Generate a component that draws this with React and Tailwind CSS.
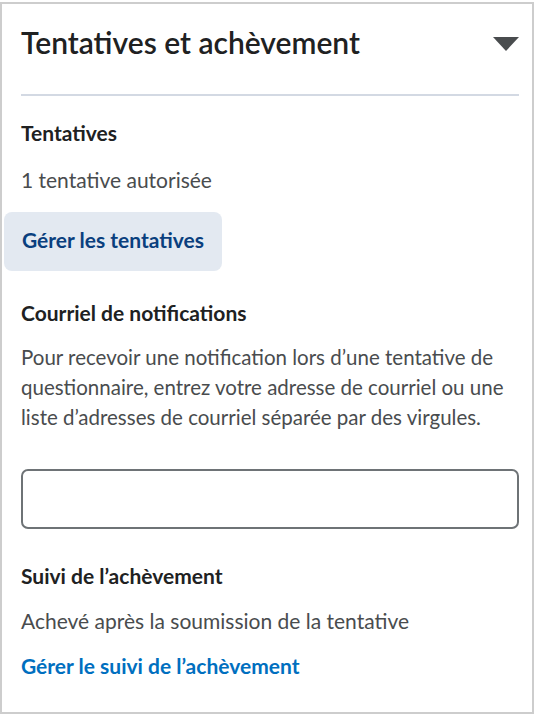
export default function App() {
  return (
    <div className="pt-[2px] bg-white" style={{ fontFamily: "Lato, 'Noto Sans', sans-serif" }}>
      <div className="w-[534px] h-[712px] border-2 border-[#cdcdcd] bg-white">
        <div className="pl-[19px] pr-[13px]">
          <div className="flex items-start justify-between pt-[20px] pb-[34px]">
            <h1 className="text-[30px] leading-[36px] font-semibold text-[#202122]">Tentatives et achèvement</h1>
            <svg width="26" height="14" viewBox="0 0 26 14" className="mt-[13px]">
              <path d="M0 0 H26 L13 14 Z" fill="#494c4e" />
            </svg>
          </div>
          <div className="h-[2px] bg-[#d3d9e3]" />
          <h2 className="mt-[24px] text-[21px] leading-[25px] font-bold text-[#202122]">Tentatives</h2>
          <p className="mt-[22px] text-[21px] leading-[25px] text-[#494c4e]">1 tentative autorisée</p>
        </div>
        <div className="pl-[2px] mt-[20px]">
          <button className="h-[59px] px-[18px] pb-[4px] rounded-[8px] bg-[#e3e9f1] text-[21px] leading-[25px] font-bold text-[#0a3f7e]">
            Gérer les tentatives
          </button>
        </div>
        <div className="pl-[19px] pr-[13px]">
          <h2 className="mt-[29px] text-[21px] leading-[25px] font-bold text-[#202122]">Courriel de notifications</h2>
          <p className="mt-[17px] text-[20.5px] leading-[30px] text-[#494c4e]">
            Pour recevoir une notification lors d’une tentative de questionnaire, entrez votre adresse de courriel ou une liste d’adresses de courriel séparée par des virgules.
          </p>
          <input
            type="text"
            className="block mt-[37px] w-full h-[60px] border-2 border-[#6e7376] rounded-[7px] px-3 outline-none"
          />
          <h2 className="mt-[34px] text-[21px] leading-[25px] font-bold text-[#202122]">Suivi de l’achèvement</h2>
          <p className="mt-[20px] text-[21px] leading-[25px] text-[#494c4e]">Achevé après la soumission de la tentative</p>
          <a href="#" className="block mt-[20px] text-[21px] leading-[25px] font-bold text-[#006fbf]">
            Gérer le suivi de l’achèvement
          </a>
        </div>
      </div>
    </div>
  );
}
